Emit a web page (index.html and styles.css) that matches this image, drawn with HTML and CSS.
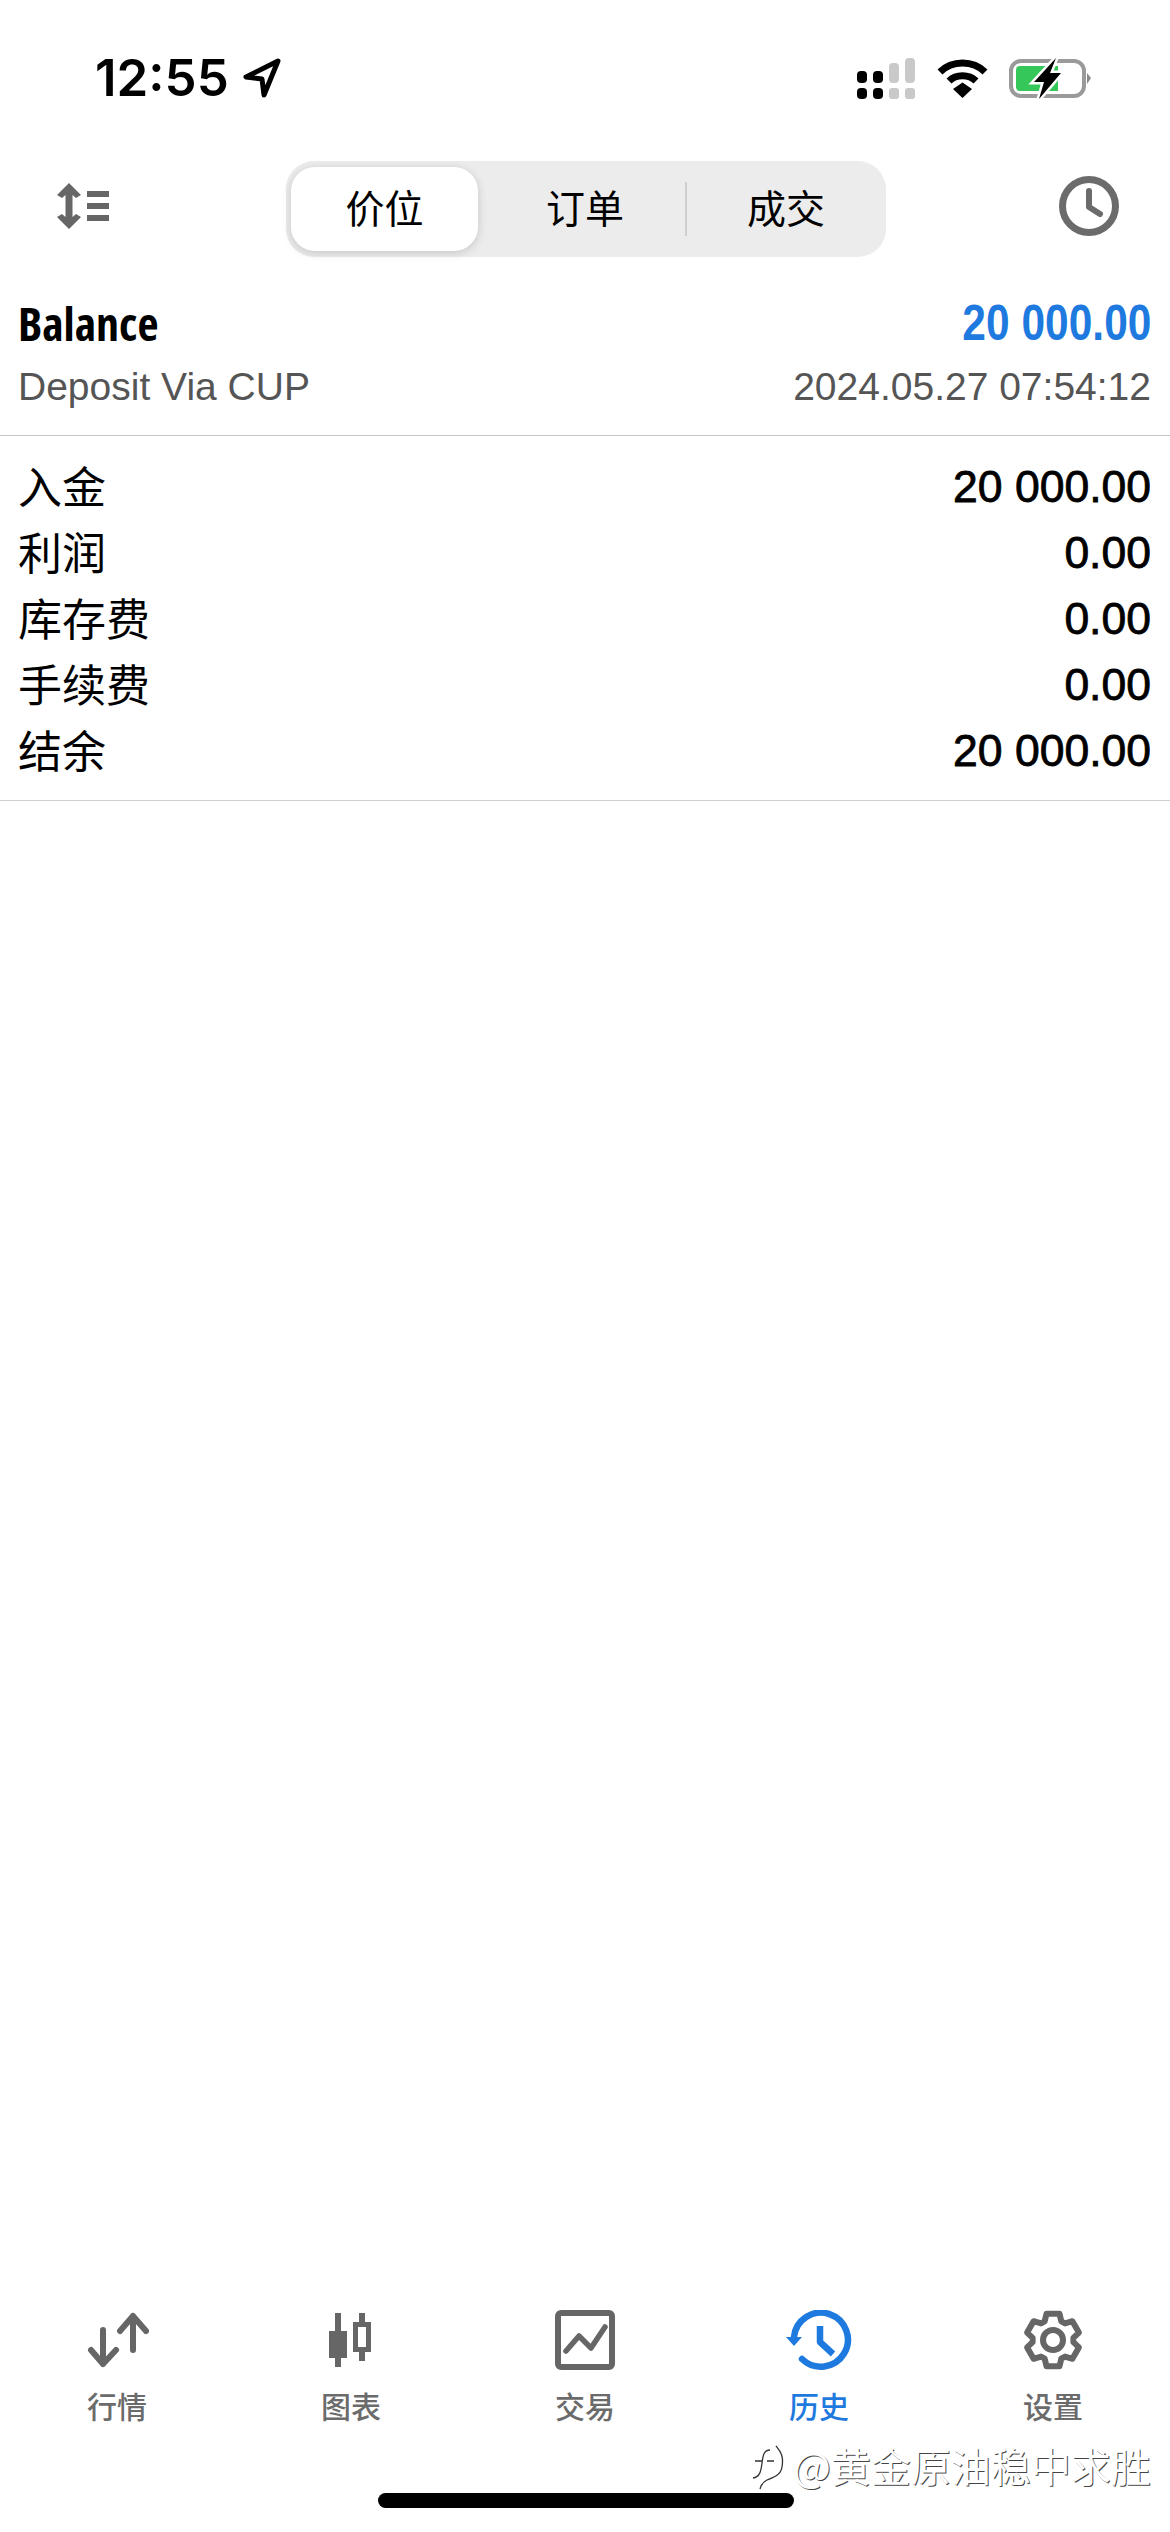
FILE: index.html
```html
<!DOCTYPE html>
<html lang="zh-CN">
<head>
    <meta charset="UTF-8">
    <meta name="viewport" content="width=device-width, initial-scale=1.0">
    <title>历史</title>
    <link rel="stylesheet" href="styles.css">
</head>
<body>
    <div class="status-bar">
        <div class="status-time">
            <span>12:55</span>
            <svg class="loc-arrow" width="40" height="40" viewBox="0 0 40 40"><path d="M36 3 L4 19 L20 21 L22 37 Z" fill="none" stroke="#000" stroke-width="5" stroke-linejoin="round"/></svg>
        </div>
        <div class="status-icons">
            <svg width="59" height="42" viewBox="0 0 59 42">
                <rect x="0" y="14" width="10" height="12" rx="4" fill="#000"/>
                <rect x="16" y="14" width="10" height="12" rx="4" fill="#000"/>
                <rect x="32" y="6" width="10" height="20" rx="4" fill="#c9c9c9"/>
                <rect x="48" y="1" width="10" height="25" rx="4" fill="#c9c9c9"/>
                <rect x="0" y="31" width="10" height="11" rx="4" fill="#000"/>
                <rect x="16" y="31" width="10" height="11" rx="4" fill="#000"/>
                <rect x="32" y="31" width="10" height="11" rx="3" fill="#c9c9c9"/>
                <rect x="48" y="31" width="10" height="11" rx="3" fill="#c9c9c9"/>
            </svg>
            <svg width="51" height="42" viewBox="0 0 51 42">
                <path d="M3 15 C15 3 36 3 48 15" fill="none" stroke="#000" stroke-width="7"/>
                <path d="M12 24 C19 17 32 17 39 24" fill="none" stroke="#000" stroke-width="7"/>
                <path d="M16 32 L25.500 25.500 L35 32 L25.500 41 Z" fill="#000"/>
            </svg>
            <svg width="82" height="42" viewBox="0 0 82 42">
                <rect x="2" y="4" width="73" height="35" rx="10" fill="none" stroke="#9a9a9a" stroke-width="4"/>
                <path d="M11 9 H49 V34 H11 Q7 34 7 30 V13 Q7 9 11 9 Z" fill="#35c759"/>
                <path d="M78 16 L82 21 L78 27 Z" fill="#8a8a8a"/>
                <path class="bolt" d="M47 1 L25 25 H35 L30 42 L52 16 H41 Z" fill="#000" stroke="#fff" stroke-width="5"/>
            </svg>
        </div>
    </div>

    <div class="toolbar">
        <svg class="toolbar-icon" width="52" height="46" viewBox="0 0 52 46">
            <path d="M12 0 L24 12 L19 15 L15.500 12 V34 L19 31 L24 34 L12 46 L0 34 L5 31 L8.500 34 V12 L5 15 L0 12 Z" fill="#666"/>
            <rect x="30" y="8" width="22" height="6" fill="#666"/>
            <rect x="30" y="20" width="22" height="6" fill="#666"/>
            <rect x="30" y="32" width="22" height="6" fill="#666"/>
        </svg>
        <div class="seg">
            <div class="seg-item seg-active">价位</div>
            <div class="seg-item seg-second">订单</div>
            <div class="seg-divider"></div>
            <div class="seg-item seg-third">成交</div>
        </div>
        <svg class="toolbar-icon" width="60" height="60" viewBox="0 0 60 60">
            <circle cx="30" cy="30" r="26.500" fill="none" stroke="#6b6b6b" stroke-width="7"/>
            <path d="M30 15 V31 L41 38" fill="none" stroke="#6b6b6b" stroke-width="6" stroke-linecap="round" stroke-linejoin="round"/>
        </svg>
    </div>

    <div class="deal-head">
        <div class="line line-title">
            <span class="deal-name">Balance</span>
            <span class="deal-amount">20 000.00</span>
        </div>
        <div class="line line-sub">
            <span>Deposit Via CUP</span>
            <span>2024.05.27 07:54:12</span>
        </div>
    </div>

    <div class="deal-rows">
        <div class="line row"><span class="row-label">入金</span><span class="row-value">20 000.00</span></div>
        <div class="line row"><span class="row-label">利润</span><span class="row-value">0.00</span></div>
        <div class="line row"><span class="row-label">库存费</span><span class="row-value">0.00</span></div>
        <div class="line row"><span class="row-label">手续费</span><span class="row-value">0.00</span></div>
        <div class="line row"><span class="row-label">结余</span><span class="row-value">20 000.00</span></div>
    </div>

    <div class="tabbar">
        <div class="tab">
            <svg width="64" height="60" viewBox="0 0 64 60">
                <path d="M18 20 V54 M6 40 L18 54 L31 40" fill="none" stroke="#666" stroke-width="6" stroke-linecap="round" stroke-linejoin="round"/>
                <path d="M48 6 V40 M35 21 L48 6 L61 21" fill="none" stroke="#666" stroke-width="6" stroke-linecap="round" stroke-linejoin="round"/>
            </svg>
            <span>行情</span>
        </div>
        <div class="tab">
            <svg width="44" height="60" viewBox="0 0 44 60">
                <rect x="6" y="3" width="6" height="54" fill="#666"/>
                <rect x="0" y="21" width="18" height="27" fill="#666"/>
                <rect x="30" y="3" width="6" height="48" fill="#666"/>
                <rect x="26.500" y="14.500" width="13" height="25" fill="#fff" stroke="#666" stroke-width="5"/>
            </svg>
            <span>图表</span>
        </div>
        <div class="tab">
            <svg width="60" height="60" viewBox="0 0 60 60">
                <rect x="3" y="3" width="54" height="54" rx="3" fill="none" stroke="#666" stroke-width="6"/>
                <path d="M11 41 L24 26 L36 38 L50 17" fill="none" stroke="#666" stroke-width="5.500" stroke-linecap="round" stroke-linejoin="round"/>
            </svg>
            <span>交易</span>
        </div>
        <div class="tab tab-active">
            <svg width="66" height="60" viewBox="0 0 66 60">
                <path d="M16 49 A27 27 0 1 0 8 27" fill="none" stroke="#1f7ae0" stroke-width="6.500" stroke-linecap="round"/>
                <path d="M0 27 H16 L8 36 Z" fill="#1f7ae0"/>
                <path d="M34 16 V32 L47 44" fill="none" stroke="#1f7ae0" stroke-width="6.500" stroke-linejoin="round"/>
            </svg>
            <span>历史</span>
        </div>
        <div class="tab">
            <svg width="60" height="60" viewBox="0 0 60 60">
                <path d="M21.700 11.300 L23.500 3.800 H36.500 L38.300 11.300 L42.050 13.400 L49.400 11.200 L55.900 22.600 L50.400 27.850 V32.150 L55.900 37.400 L49.400 48.800 L42.050 46.600 L38.300 48.700 L36.500 56.200 H23.500 L21.700 48.700 L17.950 46.600 L10.600 48.800 L4.100 37.400 L9.600 32.150 V27.850 L4.100 22.600 L10.600 11.200 L17.950 13.400 Z" fill="none" stroke="#666" stroke-width="6" stroke-linejoin="round"/>
                <circle cx="30" cy="30" r="10" fill="none" stroke="#666" stroke-width="6"/>
            </svg>
            <span>设置</span>
        </div>
    </div>

    <div class="watermark">
        <svg width="38" height="48" viewBox="0 0 38 48">
            <path d="M26 3 C30 8 34 12 32 24 C31 32 24 34 17 37 C13 39 11 42 10 46" fill="none" stroke="#333" stroke-width="1.300"/>
            <path d="M20 7 C14 7 13 12 12 20 C11 28 10 34 3 35" fill="#fff" stroke="#333" stroke-width="1.300"/>
            <path d="M5 18 H12 M17 18 H24" fill="none" stroke="#333" stroke-width="1.300"/>
        </svg>
        <span>@黄金原油稳中求胜</span>
    </div>
    <div class="home-bar"></div>
</body>
</html>
```

FILE: styles.css
```css
* {
    box-sizing: border-box;
}
body {
    position: relative;
    display: flex;
    flex-direction: column;
    width: 1170px;
    height: 2532px;
    margin: 0;
    overflow: hidden;
    background-color: #fff;
    color: #000;
    font-family: "Liberation Sans", "Noto Sans CJK SC", sans-serif;
}
svg {
    display: block;
    flex: none;
}
.bolt {
    paint-order: stroke;
}
.status-bar {
    display: flex;
    justify-content: space-between;
    align-items: center;
    height: 155px;
    padding: 0 79px 0 95px;
}
.status-time {
    display: flex;
    align-items: center;
    gap: 13px;
    font-family: Inter, sans-serif;
    font-size: 51px;
    font-weight: 600;
    line-height: 60px;
}
.status-icons {
    display: flex;
    align-items: center;
    gap: 21px;
}
.toolbar {
    display: flex;
    align-items: center;
    height: 96px;
    margin-top: 6px;
    padding: 0 51px 0 57px;
}
.toolbar-icon {
    margin-bottom: 6px;
}
.seg {
    display: flex;
    align-items: center;
    width: 600px;
    height: 96px;
    margin: 0 auto 0 177px;
    padding: 6px 5px;
    border-radius: 28px;
    background-color: #ececec;
    font-family: "Noto Sans CJK SC", sans-serif;
    font-size: 39px;
}
.seg-item {
    height: 84px;
    line-height: 79px;
    text-align: center;
}
.seg-active {
    width: 187px;
    border-radius: 24px;
    background-color: #fff;
    box-shadow: 0 2px 10px rgba(0, 0, 0, 0.16);
}
.seg-second {
    width: 207px;
    padding-left: 7px;
}
.seg-divider {
    width: 2px;
    height: 54px;
    background-color: #cfcfcf;
}
.seg-third {
    width: 194px;
    padding-left: 4px;
}
.line {
    display: flex;
    justify-content: space-between;
    align-items: center;
    padding: 0 19px 0 18px;
}
.deal-head {
    padding: 34px 0 16px;
    border-bottom: 1px solid #c6c6c6;
}
.line-title {
    height: 64px;
}
.deal-name {
    font-family: "Open Sans", sans-serif;
    font-size: 46px;
    font-stretch: 75%;
    font-weight: 700;
}
.deal-amount {
    display: inline-block;
    color: #1f7ae0;
    font-size: 50px;
    font-weight: 700;
    transform: scaleX(0.85);
    transform-origin: right center;
}
.line-sub {
    height: 64px;
    color: #555;
    font-size: 39px;
}
.deal-rows {
    padding: 18px 0 16px;
    border-bottom: 1px solid #d0d0d0;
}
.row {
    height: 66px;
}
.row-label {
    padding-bottom: 5px;
    font-family: "Noto Sans CJK SC", sans-serif;
    font-size: 44px;
}
.row-value {
    font-size: 44.500px;
    -webkit-text-stroke: 0.8px #000;
}
.tabbar {
    display: grid;
    grid-template-columns: repeat(5, 1fr);
    margin-top: auto;
    padding-bottom: 107px;
}
.tab {
    display: flex;
    flex-direction: column;
    align-items: center;
    gap: 15px;
    color: #6b6b6b;
    font-family: "Noto Sans CJK SC", sans-serif;
    font-size: 30px;
    font-weight: 500;
    line-height: 40px;
}
.tab-active {
    color: #1f7ae0;
}
.watermark {
    position: absolute;
    left: 750px;
    top: 2443px;
    display: flex;
    align-items: flex-start;
    gap: 5px;
    color: #fff;
    font-family: "Noto Sans CJK SC", sans-serif;
    font-size: 40px;
    line-height: 44px;
    text-shadow: 1px 1px 0 #444;
}
.home-bar {
    position: absolute;
    left: 378px;
    top: 2493px;
    width: 416px;
    height: 15px;
    border-radius: 8px;
    background-color: #000;
}
```
